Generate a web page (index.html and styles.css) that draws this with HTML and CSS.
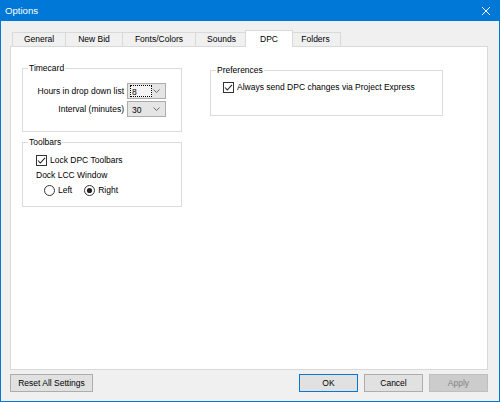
FILE: index.html
```html
<!DOCTYPE html>
<html>
<head>
<meta charset="utf-8">
<title>Options</title>
<link rel="stylesheet" href="styles.css">
</head>
<body>
<div class="window">
  <div class="titlebar">
    <span class="title">Options</span>
    <svg class="close" width="10" height="10" viewBox="0 0 10 10"><path d="M1 1L9 9M9 1L1 9" stroke="#fff" stroke-width="1"/></svg>
  </div>
  <div class="client">
    <div class="tabs">
      <div class="tab w-general">General</div>
      <div class="tab w-newbid">New Bid</div>
      <div class="tab w-fonts">Fonts/Colors</div>
      <div class="tab w-sounds">Sounds</div>
      <div class="tab w-dpc selected">DPC</div>
      <div class="tab w-folders">Folders</div>
    </div>
    <div class="panel">
      <div class="col-left">
        <fieldset class="group timecard">
          <legend>Timecard</legend>
          <div class="formgrid">
            <span class="lbl">Hours in drop down list</span>
            <div class="combo"><span class="val focus">8</span><svg class="chev" width="7" height="4" viewBox="0 0 7 4"><path d="M0.5 0.5L3.5 3.5L6.5 0.5" fill="none" stroke="#6a6a6a" stroke-width="1"/></svg></div>
            <span class="lbl">Interval (minutes)</span>
            <div class="combo"><span class="val">30</span><svg class="chev" width="7" height="4" viewBox="0 0 7 4"><path d="M0.5 0.5L3.5 3.5L6.5 0.5" fill="none" stroke="#6a6a6a" stroke-width="1"/></svg></div>
          </div>
        </fieldset>
        <fieldset class="group toolbars">
          <legend>Toolbars</legend>
          <div class="row"><svg class="box" width="11" height="11" viewBox="0 0 11 11"><rect x="0.5" y="0.5" width="10" height="10" fill="#fff" stroke="#333"/><path d="M2 5.5L4.3 8L9 2.8" fill="none" stroke="#222" stroke-width="1.1"/></svg><span>Lock DPC Toolbars</span></div>
          <div class="row">Dock LCC Window</div>
          <div class="row radios">
            <span class="radio"><svg width="11" height="11" viewBox="0 0 11 11"><circle cx="5.5" cy="5.5" r="5" fill="#fff" stroke="#333"/></svg><span>Left</span></span>
            <span class="radio"><svg width="11" height="11" viewBox="0 0 11 11"><circle cx="5.5" cy="5.5" r="5" fill="#fff" stroke="#333"/><circle cx="5.5" cy="5.5" r="2.6" fill="#222"/></svg><span>Right</span></span>
          </div>
        </fieldset>
      </div>
      <fieldset class="group prefs">
        <legend>Preferences</legend>
        <div class="row"><svg class="box" width="11" height="11" viewBox="0 0 11 11"><rect x="0.5" y="0.5" width="10" height="10" fill="#fff" stroke="#333"/><path d="M2 5.5L4.3 8L9 2.8" fill="none" stroke="#222" stroke-width="1.1"/></svg><span>Always send DPC changes via Project Express</span></div>
      </fieldset>
    </div>
    <div class="buttons">
      <button class="btn reset">Reset All Settings</button>
      <div class="right-btns">
        <button class="btn default">OK</button>
        <button class="btn">Cancel</button>
        <button class="btn disabled">Apply</button>
      </div>
    </div>
  </div>
</div>
</body>
</html>
```

FILE: styles.css
```css
* { box-sizing: border-box; }
html, body { margin: 0; padding: 0; }
body {
  width: 500px;
  height: 402px;
  font-family: "Liberation Sans", Arial, sans-serif;
  font-size: 8.5px;
  color: #000;
  background: #fff;
}
.window {
  width: 500px;
  height: 402px;
  border: 1px solid #0078d7;
  border-top: 0;
  background: #f0f0f0;
  display: flex;
  flex-direction: column;
}
.titlebar {
  height: 21px;
  margin: 0 -1px;
  background: #0078d7;
  color: #fff;
  display: flex;
  align-items: center;
  justify-content: space-between;
  padding: 0 9px 0 5px;
}
.title { font-size: 9.6px; line-height: 12px; }
.close { display: block; }
.client {
  flex: 1;
  padding: 9px 11px 9px 9px;
  display: flex;
  flex-direction: column;
}
.tabs {
  height: 16px;
  display: flex;
  align-items: flex-end;
  padding-left: 2px;
}
.tab {
  height: 14px;
  border: 1px solid #d9d9d9;
  border-bottom: 0;
  margin-right: -1px;
  background: #f0f0f0;
  text-align: center;
  line-height: 13px;
  white-space: nowrap;
}
.w-general { width: 54px; }
.w-newbid { width: 58px; }
.w-fonts { width: 74px; }
.w-sounds { width: 53px; }
.w-dpc { width: 44px; }
.w-folders { width: 51px; }
.tab.selected {
  position: relative;
  z-index: 1;
  width: 48px;
  height: 17px;
  margin-left: -2px;
  margin-right: -3px;
  margin-bottom: -1px;
  background: #fff;
  line-height: 17px;
}
.panel {
  height: 324px;
  background: #fff;
  border: 1px solid #d9d9d9;
  padding: 16px 0 0 11px;
  display: flex;
  align-items: flex-start;
  gap: 28px;
}
.col-left {
  width: 160px;
  display: flex;
  flex-direction: column;
  gap: 5px;
}
.group {
  margin: 0;
  border: 1px solid #dcdcdc;
  min-width: 0;
}
.group legend {
  padding: 0 1px;
  margin-left: 5px;
  line-height: 10px;
  height: 10px;
}
.timecard { padding: 10px 0 14px 0; }
.formgrid {
  display: grid;
  grid-template-columns: 101px 39px;
  column-gap: 3px;
  row-gap: 2px;
  align-items: center;
}
.lbl { text-align: right; white-space: nowrap; }
.combo {
  height: 16px;
  border: 1px solid #adadad;
  background: #e5e5e5;
  display: flex;
  align-items: center;
  justify-content: space-between;
  padding: 0 5px 0 2px;
}
.val {
  line-height: 12px;
  height: 12px;
  padding: 0 1px;
  border: 1px solid transparent;
}
.val.focus {
  width: 22px;
  border: 1px dotted #000;
  background: #f4f4f4;
}
.chev { display: block; }
.toolbars { padding: 6px 0 8px 13px; }
.toolbars legend { margin-left: -8px; }
.prefs {
  width: 233px;
  margin-top: 2px;
  padding: 5px 0 20px 12px;
}
.prefs legend { margin-left: -7px; }
.row {
  height: 15px;
  line-height: 15px;
  display: flex;
  align-items: center;
  white-space: nowrap;
}
.box { display: block; margin-right: 3px; flex: none; }
.radios { padding-left: 8px; gap: 12px; }
.radio { display: flex; align-items: center; }
.radio svg { display: block; margin-right: 3px; }
.buttons {
  margin-top: 4px;
  display: flex;
  justify-content: space-between;
}
.right-btns { display: flex; gap: 6px; }
.btn {
  height: 18px;
  width: 59px;
  padding: 0;
  margin: 0;
  font: inherit;
  color: #000;
  background: #e1e1e1;
  border: 1px solid #adadad;
  border-radius: 0;
  line-height: 16px;
}
.btn.reset { width: 83px; }
.btn.default { border-color: #0078d7; }
.btn.disabled {
  background: #cccccc;
  border-color: #bfbfbf;
  color: #838383;
}
```
